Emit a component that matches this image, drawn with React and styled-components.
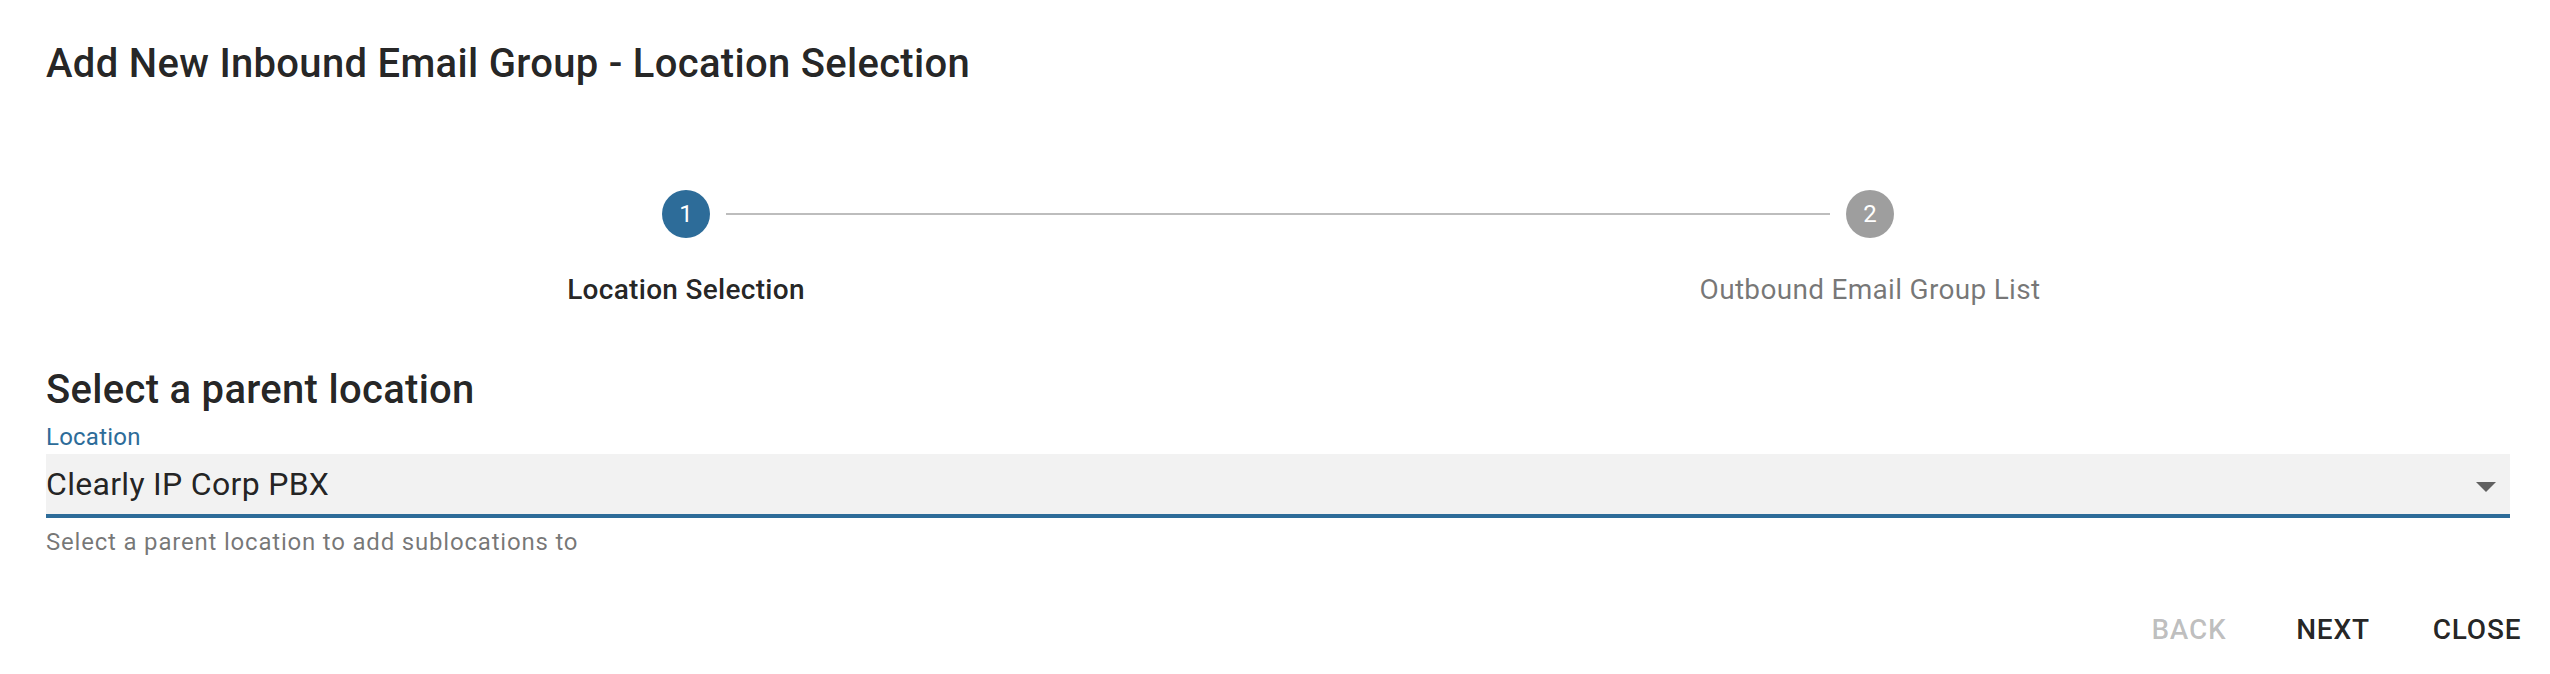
import React from 'react';
import styled, { createGlobalStyle } from 'styled-components';

const GlobalStyle = createGlobalStyle`
  html, body {
    margin: 0;
    padding: 0;
    background: #ffffff;
    font-family: Roboto, "Liberation Sans", Arial, sans-serif;
    color: rgba(0, 0, 0, 0.87);
  }
`;

const PRIMARY = '#2d6c99';

const Dialog = styled.div`
  width: 2550px;
  box-sizing: border-box;
  padding: 32px 40px 0 46px;
`;

const Title = styled.h2`
  margin: 0;
  font-size: 40px;
  font-weight: 500;
  line-height: 64px;
  letter-spacing: 0.0075em;
  color: rgba(0, 0, 0, 0.87);
`;

const Stepper = styled.div`
  display: flex;
  padding: 48px;
  margin-top: 46px;
`;

const Step = styled.div`
  flex: 1;
  position: relative;
  display: flex;
  flex-direction: column;
  align-items: center;
`;

const Connector = styled.span`
  position: absolute;
  top: 23px;
  left: calc(-50% + 40px);
  right: calc(50% + 40px);
  height: 2px;
  background: #bdbdbd;
`;

const StepCircle = styled.div`
  width: 48px;
  height: 48px;
  border-radius: 50%;
  background: ${p => (p.$active ? PRIMARY : 'rgba(0, 0, 0, 0.38)')};
  color: #ffffff;
  display: flex;
  align-items: center;
  justify-content: center;
  font-size: 24px;
  line-height: 1;
`;

const StepLabel = styled.div`
  margin-top: 32px;
  font-size: 28px;
  line-height: 40px;
  letter-spacing: 0.01071em;
  font-weight: ${p => (p.$active ? 500 : 400)};
  color: ${p => (p.$active ? 'rgba(0, 0, 0, 0.87)' : 'rgba(0, 0, 0, 0.54)')};
`;

const SectionHeading = styled.h3`
  margin: 0;
  font-size: 40px;
  font-weight: 500;
  line-height: 64px;
  letter-spacing: 0.0075em;
`;

const FieldLabel = styled.label`
  display: block;
  font-size: 24px;
  line-height: 30px;
  color: ${PRIMARY};
  margin-bottom: 2px;
  letter-spacing: 0.00938em;
`;

const SelectBox = styled.div`
  height: 60px;
  background: #f2f2f2;
  border-bottom: 4px solid ${PRIMARY};
  display: flex;
  align-items: center;
  justify-content: space-between;
`;

const SelectValue = styled.span`
  font-size: 32px;
  line-height: 60px;
  letter-spacing: 0.00938em;
  color: rgba(0, 0, 0, 0.87);
`;

const ArrowIcon = styled.svg`
  width: 48px;
  height: 48px;
  fill: rgba(0, 0, 0, 0.6);
  margin-top: 4px;
`;

const HelperText = styled.p`
  margin: 6px 0 0;
  font-size: 24px;
  line-height: 36px;
  letter-spacing: 0.03333em;
  color: rgba(0, 0, 0, 0.54);
`;

const Actions = styled.div`
  display: flex;
  justify-content: flex-end;
  gap: 16px;
  margin: 33px -31px 0 0;
`;

const ActionButton = styled.button`
  min-width: 128px;
  padding: 12px 16px;
  border: none;
  background: transparent;
  font-family: inherit;
  font-size: 28px;
  font-weight: 500;
  line-height: 49px;
  letter-spacing: 0.02857em;
  text-transform: uppercase;
  color: ${p => (p.disabled ? 'rgba(0, 0, 0, 0.26)' : 'rgba(0, 0, 0, 0.87)')};
  cursor: ${p => (p.disabled ? 'default' : 'pointer')};
`;

const steps = [
  { n: 1, label: 'Location Selection', active: true },
  { n: 2, label: 'Outbound Email Group List', active: false },
];

const App = () => {
  return (
    <>
      <GlobalStyle />
      <Dialog>
        <Title>Add New Inbound Email Group - Location Selection</Title>

        <Stepper>
          {steps.map((s, i) => (
            <Step key={s.n}>
              {i > 0 && <Connector />}
              <StepCircle $active={s.active}>{s.n}</StepCircle>
              <StepLabel $active={s.active}>{s.label}</StepLabel>
            </Step>
          ))}
        </Stepper>

        <SectionHeading>Select a parent location</SectionHeading>
        <FieldLabel>Location</FieldLabel>
        <SelectBox>
          <SelectValue>Clearly IP Corp PBX</SelectValue>
          <ArrowIcon viewBox="0 0 24 24">
            <path d="M7 10l5 5 5-5z" />
          </ArrowIcon>
        </SelectBox>
        <HelperText>Select a parent location to add sublocations to</HelperText>

        <Actions>
          <ActionButton disabled>Back</ActionButton>
          <ActionButton>Next</ActionButton>
          <ActionButton>Close</ActionButton>
        </Actions>
      </Dialog>
    </>
  );
};

export default App;
